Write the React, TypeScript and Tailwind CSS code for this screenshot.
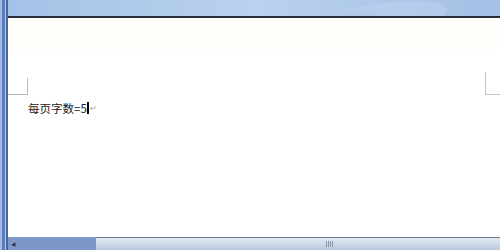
export default function App() {
  return (
    <div className="flex w-[500px] h-[250px] overflow-hidden bg-white font-['Noto_Sans_CJK_SC',sans-serif]">
      {/* Left window edge */}
      <div className="flex h-full w-[8px] shrink-0">
        <div className="w-[2px] bg-[#a3bbe0]" />
        <div className="w-[3px] bg-[#5a7dba]" />
        <div className="w-[1px] bg-[#b4c8e6]" />
        <div className="w-[2px] bg-[#46659c]" />
      </div>

      <div className="flex flex-1 flex-col">
        {/* Top ribbon edge */}
        <div className="relative h-[16px] overflow-hidden bg-gradient-to-r from-[#a6c1e6] via-[#b9d2ee] to-[#a5bfe5]">
          <div className="absolute left-[300px] top-[4px] h-[30px] w-[140px] -rotate-[8deg] rounded-[50%] bg-[#bdd4f0] opacity-50" />
          <div className="absolute left-[310px] top-[11px] h-[20px] w-[60px] -rotate-[6deg] rounded-[50%] bg-[#a9c0e6] opacity-40" />
        </div>
        <div className="h-[2px] bg-[#262c3a]" />

        {/* Page */}
        <div className="flex flex-1 bg-gradient-to-b from-[#fffef8] to-white to-[20%]">
          <div className="flex flex-1 flex-col">
            <div className="flex h-[77px] items-end justify-between">
              <div className="h-[17px] w-[20px] border-r border-b border-[#b9b9b9]" />
              <div className="h-[23px] w-[15px] border-l border-b border-[#c4c4c4]" />
            </div>
            <div className="mt-[6px] flex items-center pl-[20px] text-[11.5px] leading-[14px] text-[#222]">
              <span>每页字数=5</span>
              <span className="h-[12px] w-[2px] bg-black" />
              <span className="ml-[1px] text-[8px] leading-[8px] text-[#a0a0a0]">↵</span>
            </div>
          </div>
        </div>

        {/* Horizontal scrollbar */}
        <div className="flex h-[13px] shrink-0">
          <div className="flex w-[88px] items-center bg-[#7c97c8] pl-[3px]">
            <span className="text-[5px] leading-[5px] text-[#26375c]">◀</span>
          </div>
          <div className="flex flex-1 flex-col">
            <div className="h-[1px] bg-[#6a7b98]" />
            <div className="flex flex-1 items-center bg-gradient-to-b from-[#e4eaf3] via-[#cdd8e8] to-[#b9c8dd] pl-[230px]">
              <div className="flex h-[6px] gap-[1px]">
                <div className="w-[1px] bg-[#8a96aa]" />
                <div className="w-[1px] bg-[#8a96aa]" />
                <div className="w-[1px] bg-[#8a96aa]" />
                <div className="w-[1px] bg-[#8a96aa]" />
              </div>
            </div>
          </div>
        </div>
      </div>
    </div>
  )
}
